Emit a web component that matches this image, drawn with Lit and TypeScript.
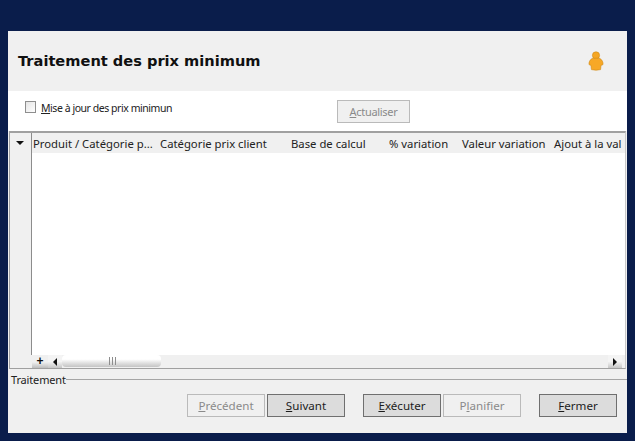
import { LitElement, html, css } from "lit";
import { customElement } from "lit/decorators.js";

@customElement("app-root")
export class AppRoot extends LitElement {
  static styles = css`
    :host { display: block; width: 635px; height: 441px; background: #0a1d4b; overflow: hidden; font-family: "Noto Sans", sans-serif; font-size: 11.3px; color: #1c1c1c; }
    .win { box-sizing: border-box; margin: 0 8px; position: relative; top: 31px; width: 619px; height: 402px; background: #f0f0f0; display: flex; flex-direction: column; }
    .head { height: 60px; flex: none; display: flex; align-items: center; justify-content: space-between; padding: 0 23px 0 10px; }
    .title { font-family: "DejaVu Sans", sans-serif; font-weight: 700; font-size: 14.6px; color: #101010; margin-top: -2px; }
    .tools { height: 40px; flex: none; background: #fff; display: flex; position: relative; }
    .chk { display: flex; align-items: center; gap: 5px; height: 16px; margin: 9px 0 0 17px; font-size: 10.5px; letter-spacing: -0.45px; color: #222; }
    .box { width: 9px; height: 10px; border: 1px solid #8e8e8e; background: linear-gradient(135deg, #e4e4e4, #fff); margin-top: -3px; }
    .act { margin: 9px 0 0 165px; }
    .btn { box-sizing: border-box; height: 23px; width: 78px; border: 1px solid #6f6f6f; background: #dcdcdc; display: flex; align-items: center; justify-content: center; font-size: 11.6px; color: #1c1c1c; }
    .btn.off { border-color: #bababa; background: #f0f0f0; color: #8a8a8a; }
    .act.btn { width: 73px; font-size: 11px; letter-spacing: -0.3px; height: 23px; }
    u { text-underline-offset: 1px; }
    .grid { box-sizing: border-box; margin-left: 1px; width: 617px; height: 238px; flex: none; border-top: 2px solid #a0a0a0; border-left: 1px solid #a0a0a0; border-right: 1px solid #c8c8c8; border-bottom: 1px solid #a0a0a0; display: flex; flex-direction: column; background: #fff; }
    .main { flex: 1; display: flex; min-height: 0; }
    .gutter { width: 21px; flex: none; background: #f0f0f0; border-right: 1px solid #8c8c8c; position: relative; }
    .tri { position: absolute; left: 6px; top: 8px; width: 0; height: 0; border-left: 4px solid transparent; border-right: 4px solid transparent; border-top: 4px solid #111; }
    .cols { flex: 1; min-width: 0; overflow: hidden; }
    .hdr { height: 20px; padding-top: 1px; box-sizing: border-box; background: #f0f0f0; display: flex; align-items: center; white-space: nowrap; color: #222; position: relative; }
    .hdr span { flex: none; }
    .scroll { height: 13px; flex: none; display: flex; align-items: stretch; background: #f0f0f0; }
    .sg { width: 22px; flex: none; }
    .plus { width: 16px; flex: none; background: linear-gradient(#f0f0f0 55%, #bdbdbd); font: 700 12px/13px "Liberation Sans", sans-serif; color: #111; text-align: center; }
    .arrow { width: 14px; flex: none; background: linear-gradient(#f4f4f4 50%, #c6c6c6); display: flex; align-items: center; justify-content: center; }
    .arrow.end { margin-right: 3px; }
    .al { width: 0; height: 0; border-top: 4px solid transparent; border-bottom: 4px solid transparent; border-right: 4px solid #111; }
    .ar { width: 0; height: 0; border-top: 4px solid transparent; border-bottom: 4px solid transparent; border-left: 4px solid #111; }
    .track { flex: 1; }
    .thumb { width: 99px; height: 12px; border-radius: 4px; background: linear-gradient(#fff 35%, #e2e2e2 65%, #c4c4c4); display: flex; align-items: center; justify-content: center; gap: 1px; }
    .thumb i { width: 1px; height: 8px; background: #8d8d8d; margin-left: 1px; }
    .foot { flex: 1; display: flex; flex-direction: column; }
    .sect { display: flex; align-items: center; height: 16px; margin: 2px 0 1px 3px; }
    .sect b { font-weight: 400; font-size: 11px; color: #222; letter-spacing: -0.15px; }
    .sect hr { flex: 1; margin: 0; border: 0; height: 1px; background: #a5a5a5; }
    .btns { display: flex; margin: 6px 0 0 179px; }
    .s1 { margin-left: 18px; }
    .s3 { margin-left: 18px; }
    .left { margin-left: 2px; }
  `;

  render() {
    const cols: [string, number][] = [
      ["Produit / Catégorie p...", 127],
      ["Catégorie prix client", 131],
      ["Base de calcul", 98],
      ["% variation", 73],
      ["Valeur variation", 92],
      ["Ajout à la val", 70],
    ];
    return html`
      <div class="win">
        <div class="head">
          <div class="title">Traitement des prix minimum</div>
          <svg width="16" height="20" viewBox="0 0 16 20">
            <circle cx="8" cy="4.4" r="3.6" fill="#f5a623" stroke="#d08a18" stroke-width=".6" />
            <path d="M4 7.6 C5.5 7 10.5 7 12 7.6 C14 8.6 15.4 11.4 15 13.6 L13 14.4 L12.6 18.6 Q8 19.8 3.4 18.6 L3 14.4 L1 13.6 C.6 11.4 2 8.6 4 7.6Z" fill="#f7a826" stroke="#cf8a1a" stroke-width=".6" />
          </svg>
        </div>
        <div class="tools">
          <div class="chk"><div class="box"></div><span><u>M</u>ise à jour des prix minimun</span></div>
          <div class="act btn off"><span><u>A</u>ctualiser</span></div>
        </div>
        <div class="grid">
          <div class="main">
            <div class="gutter"><div class="tri"></div></div>
            <div class="cols">
              <div class="hdr">
                ${cols.map(([t, w]) => html`<span style="width:${w}px;padding-left:1px;box-sizing:border-box">${t}</span>`)}
              </div>
            </div>
          </div>
          <div class="scroll">
            <div class="sg"></div>
            <div class="plus">+</div>
            <div class="arrow"><div class="al"></div></div>
            <div class="track"><div class="thumb"><i></i><i></i><i></i></div></div>
            <div class="arrow end"><div class="ar"></div></div>
          </div>
        </div>
        <div class="foot">
          <div class="sect"><b>Traitement</b><hr /></div>
          <div class="btns">
            <div class="btn off"><span><u>P</u>récédent</span></div>
            <div class="btn left"><span><u>S</u>uivant</span></div>
            <div class="btn s1"><span><u>E</u>xécuter</span></div>
            <div class="btn off left"><span>P<u>l</u>anifier</span></div>
            <div class="btn s3"><span><u>F</u>ermer</span></div>
          </div>
        </div>
      </div>
    `;
  }
}
